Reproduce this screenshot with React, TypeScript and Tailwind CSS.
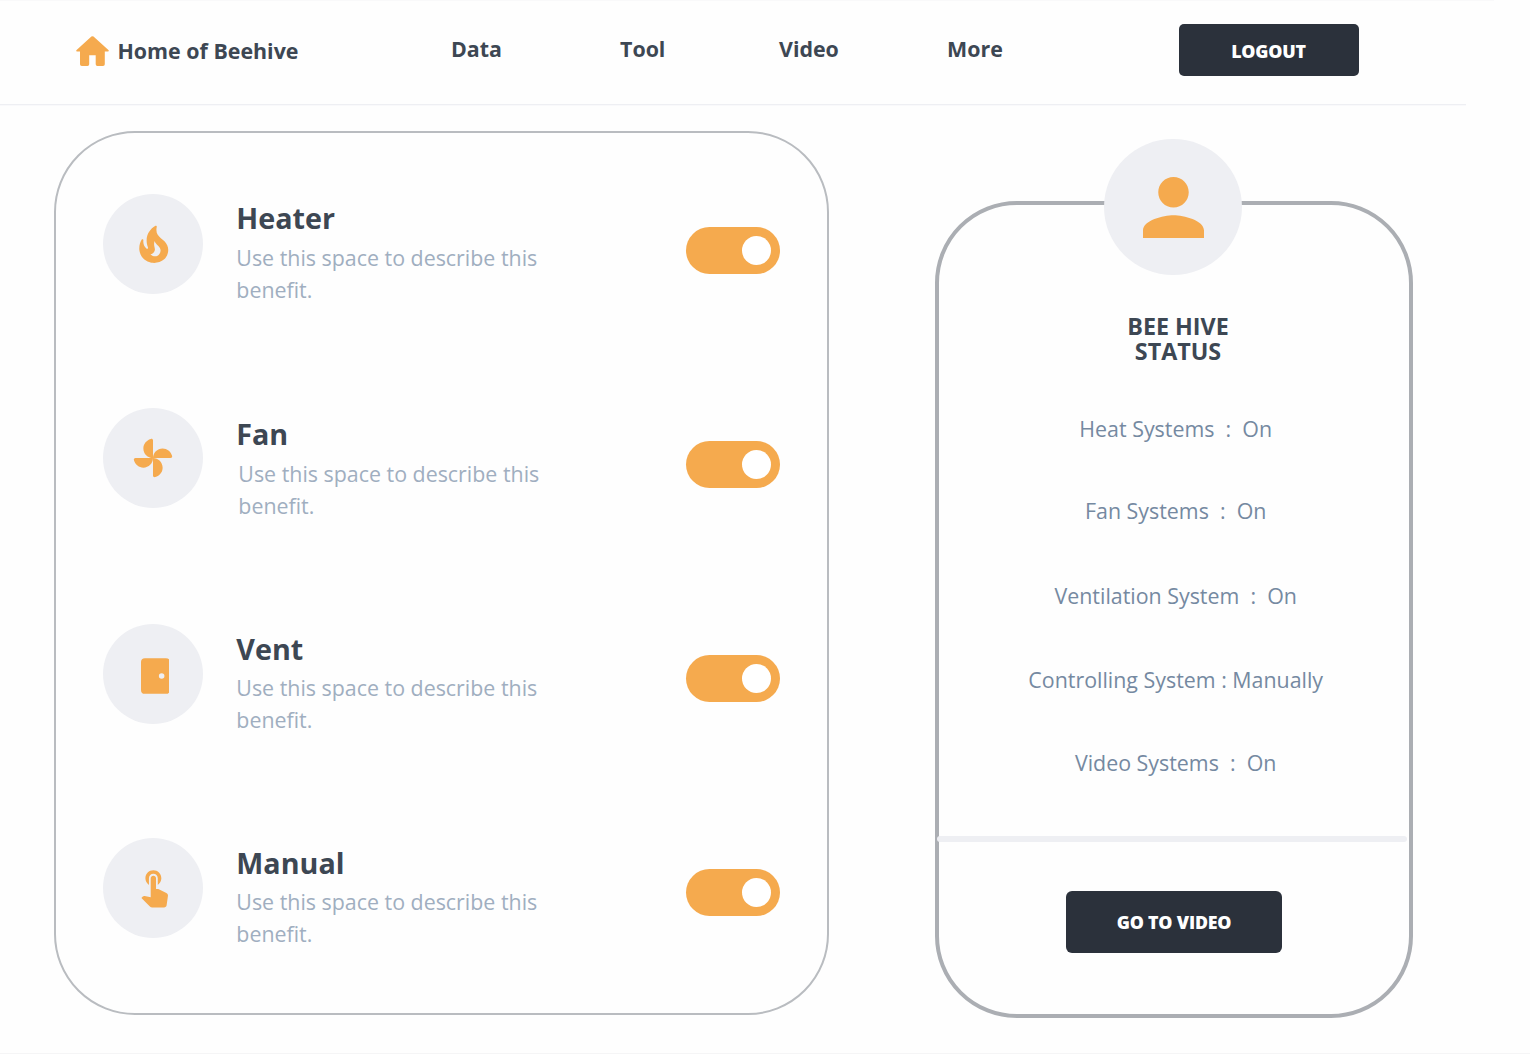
import React from 'react';

type IconProps = { className?: string };

function HomeIcon({ className }: IconProps) {
  return (
    <svg viewBox="0 0 33 30" fill="currentColor" className={className}>
      <path d="M13.2 28.3V19.2H19.7V28.3Q19.7 30 21.4 30H27Q28.8 30 28.8 28.3V15.5H31.7C32.8 15.5 33.2 14.6 32.4 13.9L17.5.6Q16.4-.3 15.4.6L.6 13.9C-.2 14.6.2 15.5 1.3 15.5H4V28.3Q4 30 5.8 30H11.5Q13.2 30 13.2 28.3Z" />
    </svg>
  );
}

function FlameIcon({ className }: IconProps) {
  return (
    <svg viewBox="0 0 24 24" fill="currentColor" className={className}>
      <path d="M19.48 12.35c-1.57-4.08-7.16-4.3-5.81-10.23.1-.44-.37-.78-.75-.55C9.29 3.71 6.68 8 8.87 13.62c.18.46-.36.89-.75.59-1.81-1.37-2-3.34-1.84-4.75.06-.52-.62-.77-.91-.34C4.69 10.16 4 11.84 4 14.37c.38 5.6 5.11 7.32 6.81 7.54 2.43.31 5.06-.14 6.95-1.87 2.08-1.93 2.84-5.01 1.72-7.69zm-9.28 5.03c1.44-.35 2.18-1.39 2.38-2.31.33-1.43-.96-2.83-.09-5.09.33 1.87 3.27 3.04 3.27 5.08.08 2.53-2.66 4.7-5.56 2.32z" />
    </svg>
  );
}

function FanIcon({ className }: IconProps) {
  return (
    <svg viewBox="0 0 24 24" fill="currentColor" className={className}>
      <path d="M12 12c0-3.04 2.46-5.5 5.5-5.5 2.5 0 4.65 1.7 5.4 4.2.2.75-.2 1.3-.9 1.3zM12 12c0 3.04-2.46 5.5-5.5 5.5-2.5 0-4.65-1.7-5.4-4.2-.2-.75.2-1.3.9-1.3zM12 12c-3.04 0-5.5-2.46-5.5-5.5 0-2.5 1.7-4.65 4.2-5.4.75-.2 1.3.2 1.3.9zM12 12c3.04 0 5.5 2.46 5.5 5.5 0 2.5-1.7 4.65-4.2 5.4-.75.2-1.3-.2-1.3-.9z" />
    </svg>
  );
}

function DoorIcon({ className }: IconProps) {
  return (
    <svg viewBox="0 0 29 36" fill="currentColor" fillRule="evenodd" className={className}>
      <path d="M4 0H25Q29 0 29 4V32Q29 36 25 36H4Q0 36 0 32V4Q0 0 4 0ZM20.8 15.2A2.8 2.8 0 1 0 20.8 20.8A2.8 2.8 0 1 0 20.8 15.2Z" />
    </svg>
  );
}

function TouchIcon({ className }: IconProps) {
  return (
    <svg viewBox="0 0 24 24" fill="currentColor" className={className}>
      <path d="M9 11.24V7.5C9 6.12 10.12 5 11.5 5S14 6.12 14 7.5v3.74c1.21-.81 2-2.18 2-3.74C16 5.01 13.99 3 11.5 3S7 5.01 7 7.5c0 1.56.79 2.93 2 3.74zm9.84 4.63-4.54-2.26c-.17-.07-.35-.11-.54-.11H13v-6c0-.83-.67-1.5-1.5-1.5S10 6.67 10 7.5v10.74l-3.43-.72c-.08-.01-.15-.03-.24-.03-.31 0-.59.13-.79.33l-.79.8 4.94 4.94c.27.27.65.44 1.06.44h6.79c.75 0 1.33-.55 1.44-1.28l.75-5.27c.01-.07.02-.14.02-.2 0-.62-.38-1.16-.91-1.38z" />
    </svg>
  );
}

function PersonIcon({ className }: IconProps) {
  return (
    <svg viewBox="4 4 16 16" fill="currentColor" className={className}>
      <path d="M12 12c2.21 0 4-1.79 4-4s-1.79-4-4-4-4 1.79-4 4 1.79 4 4 4zm0 2c-2.67 0-8 1.34-8 4v2h16v-2c0-2.66-5.33-4-8-4z" />
    </svg>
  );
}

function Toggle({ className }: IconProps) {
  return (
    <button
      type="button"
      role="switch"
      aria-checked="true"
      className={`flex h-[47px] w-[94px] items-center justify-end rounded-full bg-[#f5aa4e] pr-[9px] ${className}`}
    >
      <span className="size-[29px] rounded-full bg-white" />
    </button>
  );
}

const devices = [
  {
    name: 'Heater',
    row: 'h-[214px]',
    title: 'mt-[3.8px]',
    text: 'mt-[4px]',
    toggle: 'mt-[33px]',
    icon: <FlameIcon className="mt-[0.5px] ml-[1px] size-[43.5px]" />,
  },
  {
    name: 'Fan',
    row: 'h-[216px]',
    title: 'mt-[5.8px]',
    text: 'mt-[4px] pl-[2px]',
    toggle: 'mt-[33px]',
    icon: <FanIcon className="size-[42px]" />,
  },
  {
    name: 'Vent',
    row: 'h-[214px]',
    title: 'mt-[4.8px]',
    text: 'mt-[3px]',
    toggle: 'mt-[31px]',
    icon: <DoorIcon className="mt-[3.5px] ml-[4px] h-[36px] w-[28.8px]" />,
  },
  {
    name: 'Manual',
    row: 'h-[100px]',
    title: 'mt-[4.8px]',
    text: 'mt-[3px]',
    toggle: 'mt-[31px]',
    icon: <TouchIcon className="mt-[-3.5px] ml-[3.2px] size-[42.5px]" />,
  },
];

const status = [
  { text: 'Heat Systems  :  On', cls: 'h-[82px]' },
  { text: 'Fan Systems  :  On', cls: 'h-[85px]' },
  { text: 'Ventilation System  :  On', cls: 'h-[84px]' },
  { text: 'Controlling System : Manually', cls: 'h-[83px]' },
  { text: 'Video Systems  :  On', cls: 'h-[32px]' },
];

export default function App() {
  return (
    <div className="flex h-[1054px] w-[1530px] flex-col overflow-hidden border-b border-[#f5f5f6] bg-[#fefefe] font-['Open_Sans',sans-serif] text-[#3d4753]">
      <div className="h-px w-[1494px] shrink-0 bg-[#f9f9fa]" />
      <header className="flex h-[104px] w-[1466px] shrink-0 items-start border-b border-[#eeeff3] pl-[76px] text-[21.4px] leading-8 font-bold shadow-[0_1px_0_#f9f9fb]">
        <a className="flex w-[374px] items-start">
          <HomeIcon className="mt-[35.3px] h-[30px] w-[33px] text-[#f5aa4e]" />
          <span className="mt-[34px] ml-[8.5px]">Home of Beehive</span>
        </a>
        <nav className="mt-[32px] flex w-[729px]">
          <a className="w-[170px] pl-[1px]">Data</a>
          <a className="w-[159px]">Tool</a>
          <a className="w-[168px]">Video</a>
          <a>More</a>
        </nav>
        <button
          type="button"
          className="mt-[23px] flex h-[52px] w-[180px] items-center justify-center rounded-[5px] bg-[#2b313b] pt-[1px] pr-[1px] text-[17.8px] font-extrabold tracking-[-0.2px] text-white"
        >
          LOGOUT
        </button>
      </header>

      <main className="flex items-start pl-[54px]">
        <section className="mt-[26px] h-[884px] w-[775px] rounded-[81px] border-2 border-[#b9bcc0] pt-[61px] pr-[47px] pl-[47px]">
          {devices.map((d) => (
            <div key={d.name} className={`flex items-start ${d.row}`}>
              <div className="flex size-[100px] shrink-0 items-center justify-center rounded-full bg-[#eeeff3] text-[#f5aa4e]">
                {d.icon}
              </div>
              <div className="ml-[33.3px] w-[320px]">
                <h2 className={`text-[28.7px] leading-10 font-bold ${d.title}`}>{d.name}</h2>
                <p className={`text-[21.4px] leading-8 text-[#a0aec0] ${d.text}`}>
                  Use this space to describe this benefit.
                </p>
              </div>
              <Toggle className={`ml-auto ${d.toggle}`} />
            </div>
          ))}
        </section>

        <aside className="mt-[96px] ml-[106px] flex h-[817px] w-[478px] flex-col items-center rounded-[82px] border-4 border-[#abaeb3]">
          <div className="z-10 mt-[-66px] mr-[2px] flex h-[136px] w-[138px] shrink-0 items-center justify-center rounded-[50%] bg-[#eeeff3]">
            <PersonIcon className="size-[61px] text-[#f5aa4e]" />
          </div>
          <h1 className="mt-[38.5px] ml-[8px] w-[140px] text-center text-[23.3px] leading-[25px] font-bold">
            BEE HIVE STATUS
          </h1>
          <div className="mt-[49px] ml-[3.4px] text-center text-[21.4px] leading-8 whitespace-pre text-[#7589a1]">
            {status.map((s) => (
              <p key={s.text} className={s.cls}>
                {s.text}
              </p>
            ))}
          </div>
          <div className="mt-[57.5px] mr-[4px] h-[6px] w-[470px] shrink-0 rounded-full bg-[#eeeff3]" />
          <button
            type="button"
            className="mt-[49px] flex h-[62px] w-[216px] items-center justify-center rounded-[6px] bg-[#2b313b] text-[17.8px] font-extrabold tracking-[-0.2px] text-white"
          >
            GO TO VIDEO
          </button>
        </aside>
      </main>
    </div>
  );
}
